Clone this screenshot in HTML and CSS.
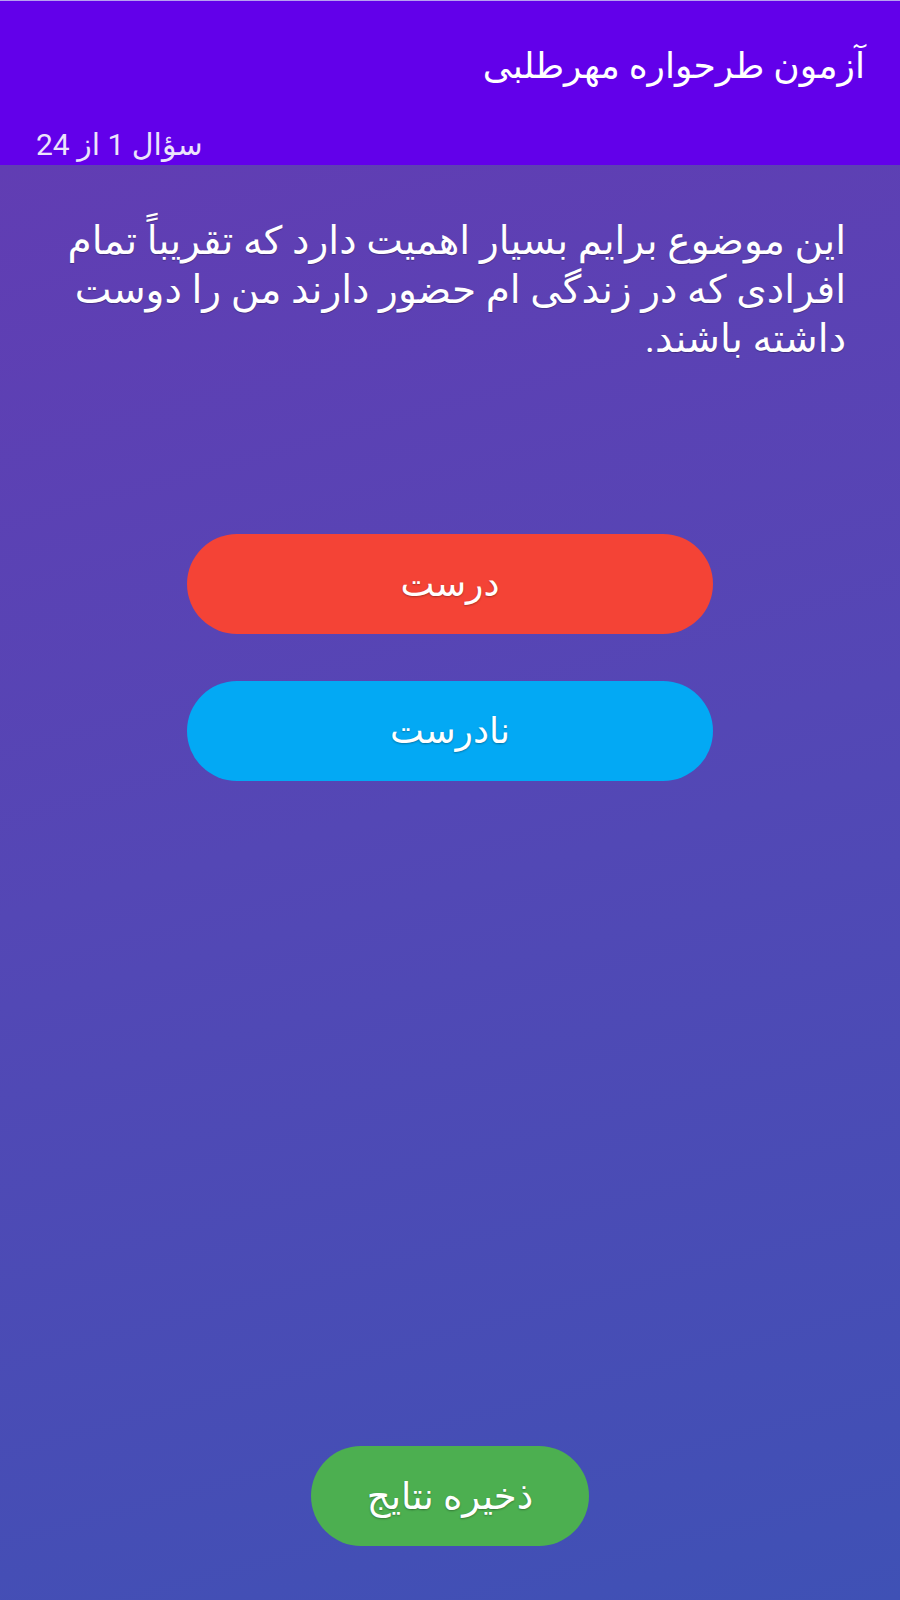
FILE: index.html
```html
<!DOCTYPE html>
<html lang="fa" dir="rtl">
<head>
<meta charset="utf-8">
<title>آزمون طرحواره مهرطلبی</title>
<link rel="stylesheet" href="styles.css">
</head>
<body>
<div class="app">
  <header class="appbar">
    <h1 class="title">آزمون طرحواره مهرطلبی</h1>
    <div class="counter">سؤال 1 از 24</div>
  </header>
  <main class="content">
    <p class="question">این موضوع برایم بسیار اهمیت دارد که تقریباً تمام افرادی که در زندگی ام حضور دارند من را دوست داشته باشند.</p>
    <div class="answers">
      <button class="btn btn-true">درست</button>
      <button class="btn btn-false">نادرست</button>
    </div>
    <div class="footer">
      <button class="btn btn-save">ذخیره نتایج</button>
    </div>
  </main>
</div>
</body>
</html>
```
FILE: styles.css
```css
html, body {
  margin: 0;
  padding: 0;
}
body {
  width: 900px;
  height: 1600px;
  font-family: Roboto, "DejaVu Sans", sans-serif;
  color: #fff;
}
.app {
  display: flex;
  flex-direction: column;
  height: 1600px;
}
.appbar {
  background: #6200ea;
  border-top: 1px solid #b7a1f0;
  height: 165px;
  box-sizing: border-box;
  display: flex;
  flex-direction: column;
  padding: 0 35px 0 36px;
}
.title {
  margin: 45px 0 0 0;
  font-size: 36px;
  font-weight: normal;
  line-height: 40px;
  text-align: right;
}
.counter {
  margin-top: 42px;
  font-size: 30px;
  line-height: 34px;
  text-align: left;
  color: #ece4fb;
}
.content {
  flex: 1;
  display: flex;
  flex-direction: column;
  background: linear-gradient(165deg, #613db3 0%, #5447b5 45%, #3f51b5 100%);
}
.question {
  margin: 52px 54px 0 50px;
  font-size: 39px;
  line-height: 49px;
  text-align: right;
  text-shadow: 0 1px 1px rgba(0,0,0,0.25);
}
.answers {
  display: flex;
  flex-direction: column;
  align-items: center;
  gap: 47px;
  margin-top: 170px;
}
.btn {
  border: none;
  color: #fff;
  font-family: Roboto, "DejaVu Sans", sans-serif;
  font-size: 36px;
  height: 100px;
  border-radius: 50px;
  text-shadow: 0 1px 2px rgba(0,0,0,0.3);
  padding: 0;
}
.btn-true {
  width: 526px;
  background: #f44336;
}
.btn-false {
  width: 526px;
  background: #03a9f4;
}
.footer {
  margin-top: auto;
  display: flex;
  justify-content: center;
  padding-bottom: 54px;
}
.btn-save {
  width: 278px;
  background: #4caf50;
  font-size: 37px;
}
```
